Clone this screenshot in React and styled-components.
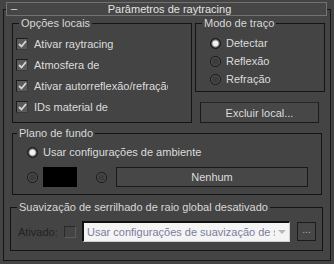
import React from 'react';
import styled, { createGlobalStyle } from 'styled-components';

const GlobalStyle = createGlobalStyle`
  html, body {
    margin: 0;
    padding: 0;
    background: #444444;
  }
  body {
    font-family: "Liberation Sans", Arial, sans-serif;
    font-size: 11px;
    color: #dcdcdc;
  }
`;

const App = () => {
  const localOptions = [
    { id: 'rt', label: 'Ativar raytracing' },
    { id: 'atm', label: 'Atmosfera de' },
    { id: 'self', label: 'Ativar autorreflexão/refração' },
    { id: 'ids', label: 'IDs material de' },
  ];
  const modes = ['Detectar', 'Reflexão', 'Refração'];

  return (
    <>
      <GlobalStyle />
      <Panel>
        <Frame>
          <Header>
            <Collapse>–</Collapse>
            <HeaderTitle>Parâmetros de raytracing</HeaderTitle>
          </Header>

          <TopRow>
            <Group $left={8} $width={180} $height={100}>
              <Legend>Opções locais</Legend>
              <CheckList>
                {localOptions.map((o) => (
                  <CheckRow key={o.id}>
                    <CheckBox>
                      <svg width="9" height="8" viewBox="0 0 9 8">
                        <path d="M1 4 L3.5 6.5 L8 1" stroke="#d6d6d6" strokeWidth="1.8" fill="none" />
                      </svg>
                    </CheckBox>
                    <RowLabel>{o.label}</RowLabel>
                  </CheckRow>
                ))}
              </CheckList>
            </Group>

            <RightColumn>
              <Group $left={0} $width={130} $height={69}>
                <Legend>Modo de traço</Legend>
                <RadioList>
                  {modes.map((m, i) => (
                    <RadioRow key={m}>
                      <Radio $on={i === 0} />
                      <span>{m}</span>
                    </RadioRow>
                  ))}
                </RadioList>
              </Group>
              <ExcludeButton>Excluir local...</ExcludeButton>
            </RightColumn>
          </TopRow>

          <Group $left={8} $width={310} $height={62} $top={10}>
            <Legend $offset={4}>Plano de fundo</Legend>
            <BackgroundBody>
              <AmbientRow>
                <Radio $on />
                <span>Usar configurações de ambiente</span>
              </AmbientRow>
              <ColorRow>
                <Radio />
                <Swatch />
                <Radio $ml={19} />
                <MapButton>Nenhum</MapButton>
              </ColorRow>
            </BackgroundBody>
          </Group>

          <Group $left={6} $width={313} $height={44} $top={12}>
            <Legend $offset={6}>Suavização de serrilhado de raio global desativado</Legend>
            <AntiAliasRow>
              <DisabledLabel>Ativado:</DisabledLabel>
              <CheckBox $disabled />
              <Dropdown>
                <DropdownText>Usar configurações de suavização de serrilhado</DropdownText>
                <DropArrow />
              </Dropdown>
              <SmallButton>...</SmallButton>
            </AntiAliasRow>
          </Group>
        </Frame>
      </Panel>
    </>
  );
};

const Panel = styled.div`
  width: 334px;
  height: 264px;
  padding: 9px 3px 0 3px;
  box-sizing: border-box;
`;

const Frame = styled.div`
  border: 1px solid #141414;
  padding-bottom: 9px;
`;

const Header = styled.div`
  position: relative;
  margin: -8px 3px 0 2px;
  height: 14px;
  box-sizing: border-box;
  border: 1px solid #727272;
  background: #464646;
  display: flex;
  align-items: center;
  justify-content: center;
`;

const Collapse = styled.span`
  position: absolute;
  left: 4px;
  top: -1px;
  color: #e0e0e0;
  font-size: 11px;
`;

const HeaderTitle = styled.span`
  color: #e4e4e4;
  line-height: 12px;
  margin-left: 6px;
`;

const TopRow = styled.div`
  display: flex;
  align-items: flex-start;
  margin-top: 7px;
`;

const Group = styled.div`
  position: relative;
  box-sizing: border-box;
  border: 1px solid #141414;
  margin-left: ${(p) => p.$left}px;
  margin-top: ${(p) => p.$top || 0}px;
  width: ${(p) => p.$width}px;
  height: ${(p) => p.$height}px;
`;

const Legend = styled.span`
  position: absolute;
  top: -8px;
  left: ${(p) => (p.$offset !== undefined ? p.$offset : 6)}px;
  padding: 0 2px;
  background: #444444;
  color: #d8d8d8;
  line-height: 14px;
  white-space: nowrap;
`;

const CheckList = styled.div`
  display: flex;
  flex-direction: column;
  padding: 9px 0 0 3px;
`;

const CheckRow = styled.div`
  display: flex;
  align-items: center;
  height: 21px;
  gap: 6px;
`;

const CheckBox = styled.span`
  width: 12px;
  height: 12px;
  box-sizing: border-box;
  flex: none;
  display: flex;
  align-items: center;
  justify-content: center;
  background: ${(p) => (p.$disabled ? '#444444' : '#5a5a5a')};
  border: 1px solid ${(p) => (p.$disabled ? '#2a2a2a' : '#1c1c1c')};
  border-right-color: ${(p) => (p.$disabled ? '#5c5c5c' : '#3a3a3a')};
  border-bottom-color: ${(p) => (p.$disabled ? '#5c5c5c' : '#3a3a3a')};
`;

const RowLabel = styled.span`
  max-width: 134px;
  overflow: hidden;
  white-space: nowrap;
`;

const RightColumn = styled.div`
  display: flex;
  flex-direction: column;
  margin-left: 3px;
`;

const RadioList = styled.div`
  display: flex;
  flex-direction: column;
  padding: 10px 0 0 14px;
`;

const RadioRow = styled.div`
  display: flex;
  align-items: center;
  height: 18px;
  gap: 5px;
`;

const Radio = styled.span`
  width: 11px;
  height: 11px;
  flex: none;
  margin-left: ${(p) => p.$ml || 0}px;
  border-radius: 50%;
  box-sizing: border-box;
  border: 1px solid #151515;
  background: ${(p) =>
    p.$on
      ? 'radial-gradient(circle, #f2f2f2 0 2.5px, #9a9a9a 3.2px, #3a3a3a 4.5px)'
      : 'radial-gradient(circle, #3c3c3c 0 2.8px, #555555 4.5px)'};
`;

const ExcludeButton = styled.button`
  margin: 10px 0 0 5px;
  width: 119px;
  height: 21px;
  box-sizing: border-box;
  background: #474747;
  border: 1px solid #1a1a1a;
  border-top-color: #262626;
  color: #dcdcdc;
  font-family: inherit;
  font-size: 11px;
  padding: 0;
`;

const BackgroundBody = styled.div`
  display: flex;
  flex-direction: column;
  padding: 11px 0 0 14px;
`;

const AmbientRow = styled.div`
  display: flex;
  align-items: center;
  height: 14px;
  gap: 5px;
`;

const ColorRow = styled.div`
  display: flex;
  align-items: center;
  margin-top: 8px;
  height: 20px;
`;

const Swatch = styled.span`
  width: 34px;
  height: 20px;
  margin-left: 5px;
  background: #000000;
`;

const MapButton = styled.button`
  width: 192px;
  height: 20px;
  margin-left: 9px;
  box-sizing: border-box;
  background: #474747;
  border: 1px solid #1a1a1a;
  color: #dcdcdc;
  font-family: inherit;
  font-size: 11px;
  padding: 0;
`;

const AntiAliasRow = styled.div`
  display: flex;
  align-items: center;
  padding: 13px 0 0 7px;
  height: 21px;
`;

const DisabledLabel = styled.span`
  color: #222222;
  margin-right: 4px;
  width: 42px;
  overflow: hidden;
  white-space: nowrap;
`;

const Dropdown = styled.div`
  display: flex;
  align-items: center;
  width: 208px;
  height: 21px;
  margin-left: 6px;
  box-sizing: border-box;
  background: #f4f4f4;
  border: 1px solid #cfcfcf;
  border-left: 2px solid #101010;
  border-top: 2px solid #101010;
  padding: 0 3px 0 3px;
`;

const DropdownText = styled.span`
  flex: 1;
  min-width: 0;
  color: #7c7c9c;
  white-space: nowrap;
  overflow: hidden;
`;

const DropArrow = styled.span`
  flex: none;
  width: 0;
  height: 0;
  margin-left: 3px;
  border-left: 4px solid transparent;
  border-right: 4px solid transparent;
  border-top: 4px solid #b8b8b8;
`;

const SmallButton = styled.button`
  width: 19px;
  height: 19px;
  margin-left: 7px;
  box-sizing: border-box;
  background: #474747;
  border: 1px solid #1c1c1c;
  color: #b0b0b0;
  font-family: inherit;
  font-size: 10px;
  padding: 0 0 3px 0;
  line-height: 10px;
`;

export default App;
